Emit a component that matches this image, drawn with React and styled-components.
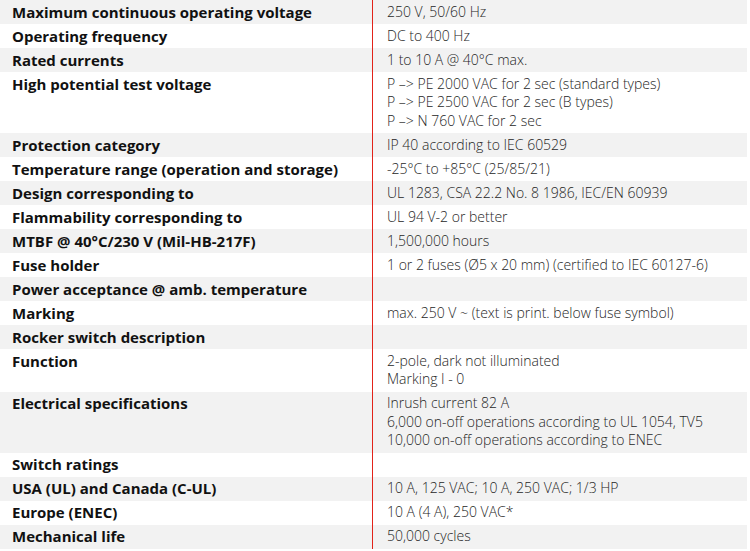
import styled, { createGlobalStyle } from 'styled-components';

const GlobalStyle = createGlobalStyle`
  html, body {
    margin: 0;
    padding: 0;
    background: #fff;
  }
`

const Table = styled.div`
  width: 747px;
  display: flex;
  flex-direction: column;
`

const Row = styled.div`
  display: grid;
  grid-template-columns: 372px 1fr;
  background-color: ${({ $shade }) => $shade ? '#f2f2f2' : '#fff'};
  line-height: 18.5px;
`

const Label = styled.div`
  padding: 2.75px 0 2.75px 12px;
  font-family: "Open Sans", "Liberation Sans", sans-serif;
  font-weight: 700;
  font-size: 15px;
  color: #111;
`

const Value = styled.div`
  padding: 2.75px 0 2.75px 14px;
  border-left: 1px solid #e2231a;
  font-family: "Open Sans", "Liberation Sans", sans-serif;
  font-weight: 300;
  font-size: 14px;
  color: #262626;
  & > div {
    white-space: nowrap;
  }
`

const specs = [
  ['Maximum continuous operating voltage', ['250 V, 50/60 Hz']],
  ['Operating frequency', ['DC to 400 Hz']],
  ['Rated currents', ['1 to 10 A @ 40°C max.']],
  ['High potential test voltage', [
    'P –> PE 2000 VAC for 2 sec (standard types)',
    'P –> PE 2500 VAC for 2 sec (B types)',
    'P –> N 760 VAC for 2 sec',
  ]],
  ['Protection category', ['IP 40 according to IEC 60529']],
  ['Temperature range (operation and storage)', ['-25°C to +85°C (25/85/21)']],
  ['Design corresponding to', ['UL 1283, CSA 22.2 No. 8 1986, IEC/EN 60939']],
  ['Flammability corresponding to', ['UL 94 V-2 or better']],
  ['MTBF @ 40°C/230 V (Mil-HB-217F)', ['1,500,000 hours']],
  ['Fuse holder', ['1 or 2 fuses (Ø5 x 20 mm) (certified to IEC 60127-6)']],
  ['Power acceptance @ amb. temperature', []],
  ['Marking', ['max. 250 V ~ (text is print. below fuse symbol)']],
  ['Rocker switch description', []],
  ['Function', ['2-pole, dark not illuminated', 'Marking I - 0']],
  ['Electrical specifications', [
    'Inrush current 82 A',
    '6,000 on-off operations according to UL 1054, TV5',
    '10,000 on-off operations according to ENEC',
  ]],
  ['Switch ratings', []],
  ['USA (UL) and Canada (C-UL)', ['10 A, 125 VAC; 10 A, 250 VAC; 1/3 HP']],
  ['Europe (ENEC)', ['10 A (4 A), 250 VAC*']],
  ['Mechanical life', ['50,000 cycles']],
]

const App = () => {
  return (
    <>
      <GlobalStyle />
      <Table>
        {specs.map(([label, lines], i) => (
          <Row key={`spec_${i}`} $shade={i % 2 === 0}>
            <Label>{label}</Label>
            <Value>
              {lines.length > 0
                ? lines.map((line, j) => <div key={`line_${j}`}>{line}</div>)
                : <div>&nbsp;</div>}
            </Value>
          </Row>
        ))}
      </Table>
    </>
  )
}

export default App
